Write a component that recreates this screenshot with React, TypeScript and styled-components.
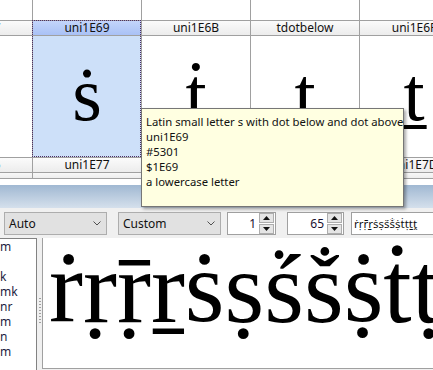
import React from 'react';
import styled, { createGlobalStyle, css } from 'styled-components';

const UI_FONT = `"Noto Sans", "Open Sans", sans-serif`;
const GLYPH_FONT = `"Liberation Serif", "DejaVu Serif", serif`;

const GlobalStyle = createGlobalStyle`
  html, body { margin: 0; padding: 0; }
  body {
    width: 433px;
    height: 370px;
    overflow: hidden;
    background: #f0f0f0;
    font-family: ${UI_FONT};
  }
`;

const Root = styled.div`
  position: relative;
  width: 433px;
  height: 370px;
  overflow: hidden;
  display: flex;
  flex-direction: column;
  background: #f0f0f0;
  font-family: ${UI_FONT};
  font-size: 12px;
  color: #000;
`;

/* ---------- glyph grid ---------- */

const GridPane = styled.div`
  flex: none;
  height: 185px;
  background: #fff;
  overflow: hidden;
  display: flex;
  flex-direction: column;
`;

const GridRow = styled.div<{ $h: number }>`
  flex: none;
  display: flex;
  height: ${(p) => p.$h}px;
  margin-left: -76px;
`;

type CellKind = 'blank' | 'caption' | 'glyph' | 'strip';

const Cell = styled.div<{ $kind: CellKind; $selected?: boolean }>`
  position: relative;
  flex: none;
  box-sizing: border-box;
  width: 109px;
  height: 100%;
  border-right: 1px solid #a0a0a0;
  border-bottom: 1px solid #a0a0a0;
  background: #fff;
  overflow: visible;

  ${(p) =>
    p.$kind === 'caption' &&
    css`
      background: linear-gradient(#fbfbfb, #ececec);
      text-align: center;
      font-size: 12px;
      line-height: 14px;
      white-space: nowrap;
      color: #111;
    `}

  ${(p) =>
    p.$kind === 'strip' &&
    css`
      background: linear-gradient(#f7f7f7, #ededed);
    `}

  ${(p) =>
    p.$kind === 'glyph' &&
    css`
      font-family: ${GLYPH_FONT};
      font-size: 76px;
      line-height: 76px;
      padding-top: 20px;
      text-align: center;
      white-space: nowrap;
      color: #000;
    `}

  ${(p) =>
    p.$selected &&
    p.$kind === 'caption' &&
    css`
      background: linear-gradient(#c3d5fb, #a9c1f5);
      &::after {
        content: '';
        position: absolute;
        top: -1px;
        left: -1px;
        right: 0;
        bottom: 0;
        border: 1px dotted #4c2f63;
        border-bottom: none;
      }
    `}

  ${(p) =>
    p.$selected &&
    p.$kind === 'glyph' &&
    css`
      background: #cde0f9;
      &::after {
        content: '';
        position: absolute;
        top: 0;
        left: -1px;
        right: 0;
        bottom: 0;
        border: 1px dotted #4c2f63;
        border-top: none;
      }
    `}
`;

const Band = styled.div`
  flex: none;
  height: 23px;
  background: linear-gradient(#a0b8d2, #d5e0ec);
`;

/* ---------- toolbar ---------- */

const Toolbar = styled.div`
  flex: none;
  height: 30px;
  box-sizing: border-box;
  padding: 4px 0 0 4px;
  display: flex;
  align-items: flex-start;
  overflow: hidden;
`;

const Combo = styled.div<{ $w: number; $ml?: number }>`
  flex: none;
  box-sizing: border-box;
  width: ${(p) => p.$w}px;
  height: 23px;
  margin-left: ${(p) => p.$ml ?? 0}px;
  border: 1px solid #adadad;
  background: #e1e1e1;
  display: flex;
  align-items: center;
  justify-content: space-between;
  padding: 0 5px 0 4px;
  font-size: 12px;
  color: #111;
`;

const Chevron = () => (
  <svg width="8" height="5" viewBox="0 0 8 5">
    <polyline points="0.5,0.5 4,4 7.5,0.5" fill="none" stroke="#505050" strokeWidth="1" />
  </svg>
);

const SpinBox = styled.div<{ $w: number; $ml?: number }>`
  flex: none;
  box-sizing: border-box;
  width: ${(p) => p.$w}px;
  height: 23px;
  margin-left: ${(p) => p.$ml ?? 0}px;
  border: 1px solid #a0a0a0;
  background: #fff;
  display: flex;
  align-items: stretch;
  padding: 0 1px 0 0;
`;

const SpinValue = styled.div`
  flex: 1;
  text-align: right;
  padding-right: 3px;
  line-height: 21px;
  font-size: 12px;
  color: #1a1030;
`;

const SpinButtons = styled.div`
  flex: none;
  width: 15px;
  display: flex;
  flex-direction: column;
  gap: 1px;
`;

const SpinButton = styled.div`
  flex: 1;
  box-sizing: border-box;
  border: 1px solid #adadad;
  background: #e5e5e5;
  display: flex;
  align-items: center;
  justify-content: center;
`;

const Arrow = ({ up }: { up?: boolean }) => (
  <svg width="7" height="4" viewBox="0 0 7 4">
    <polygon points={up ? '0,4 3.5,0 7,4' : '0,0 3.5,4 7,0'} fill="#111" />
  </svg>
);

const TextField = styled.div<{ $ml?: number }>`
  flex: 1;
  box-sizing: border-box;
  height: 23px;
  margin-left: ${(p) => p.$ml ?? 0}px;
  margin-right: -10px;
  border: 1px solid #a0a0a0;
  background: #fff;
  padding-left: 2px;
  line-height: 21px;
  font-size: 11.5px;
  white-space: nowrap;
  overflow: hidden;
  color: #111;
`;

/* ---------- bottom ---------- */

const Bottom = styled.div`
  flex: 1;
  display: flex;
  min-height: 0;
`;

const List = styled.div`
  flex: none;
  box-sizing: border-box;
  width: 37px;
  border-top: 1px solid #828282;
  border-right: 1px solid #828282;
  background: #fff;
  overflow: hidden;
`;

const ListItem = styled.div`
  height: 15px;
  line-height: 15px;
  font-size: 12px;
  white-space: nowrap;
  color: #1c1c40;
`;

const Splitter = styled.div`
  flex: none;
  width: 5px;
  display: flex;
  justify-content: center;
`;

const Grip = styled.div`
  width: 2px;
  height: 27px;
  margin-top: 60px;
  background: repeating-linear-gradient(#a0a0a0 0 1px, transparent 1px 3px);
`;

const Preview = styled.div`
  flex: 1;
  box-sizing: border-box;
  margin-bottom: 1px;
  border-left: 1px solid #a0a0a0;
  border-bottom: 1px solid #a0a0a0;
  background: #fff;
  overflow: hidden;
  white-space: nowrap;
  font-family: ${GLYPH_FONT};
  font-size: 102px;
  line-height: 99px;
  padding-left: 6px;
  color: #000;
`;

/* ---------- tooltip ---------- */

const Tooltip = styled.div`
  position: absolute;
  left: 141px;
  top: 108px;
  width: 263px;
  height: 99px;
  box-sizing: border-box;
  border: 1px solid #767676;
  background: #ffffe1;
  box-shadow: 2px 2px 3px rgba(0, 0, 0, 0.35);
  padding: 5px 0 0 4px;
  font-size: 11.3px;
  line-height: 15px;
  color: #111;
  white-space: nowrap;
`;

const TipLine = styled.div``;

/* ---------- data ---------- */

const topCaptions = ['uni1E67', 'uni1E69', 'uni1E6B', 'tdotbelow', 'uni1E6F'];
const glyphs = ['\u1E67', '\u1E61', '\u1E6B', '\u1E6D', '\u1E6F'];
const bottomCaptions = ['uni1E75', 'uni1E77', 'uni1E79', 'uni1E7B', 'uni1E7D'];
const listItems = ['m', '', 'k', 'mk', 'nr', 'm', 'n', 'm'];
const sample = '\u1E59\u1E5B\u1E5D\u1E5F\u1E61\u1E63\u1E65\u1E67\u1E69\u1E6B\u1E6D\u1E6F\u1E71';
const tipLines = [
  'Latin small letter s with dot below and dot above',
  'uni1E69',
  '#5301',
  '$1E69',
  'a lowercase letter',
];

export default function App() {
  const cols = [0, 1, 2, 3, 4];
  return (
    <>
      <GlobalStyle />
      <Root>
        <GridPane>
          <GridRow $h={21}>
            {cols.map((i) => (
              <Cell key={i} $kind="blank" />
            ))}
          </GridRow>
          <GridRow $h={15}>
            {cols.map((i) => (
              <Cell key={i} $kind="caption" $selected={i === 1}>
                {topCaptions[i]}
              </Cell>
            ))}
          </GridRow>
          <GridRow $h={122}>
            {cols.map((i) => (
              <Cell key={i} $kind="glyph" $selected={i === 1}>
                {glyphs[i]}
              </Cell>
            ))}
          </GridRow>
          <GridRow $h={15}>
            {cols.map((i) => (
              <Cell key={i} $kind="caption">
                {bottomCaptions[i]}
              </Cell>
            ))}
          </GridRow>
          <GridRow $h={6}>
            {cols.map((i) => (
              <Cell key={i} $kind="strip" />
            ))}
          </GridRow>
        </GridPane>
        <Band />
        <Toolbar>
          <Combo $w={103}>
            Auto
            <Chevron />
          </Combo>
          <Combo $w={103} $ml={11}>
            Custom
            <Chevron />
          </Combo>
          <SpinBox $w={49} $ml={6}>
            <SpinValue>1</SpinValue>
            <SpinButtons>
              <SpinButton>
                <Arrow up />
              </SpinButton>
              <SpinButton>
                <Arrow />
              </SpinButton>
            </SpinButtons>
          </SpinBox>
          <SpinBox $w={57} $ml={11}>
            <SpinValue>65</SpinValue>
            <SpinButtons>
              <SpinButton>
                <Arrow up />
              </SpinButton>
              <SpinButton>
                <Arrow />
              </SpinButton>
            </SpinButtons>
          </SpinBox>
          <TextField $ml={7}>{sample}</TextField>
        </Toolbar>
        <Bottom>
          <List>
            {listItems.map((t, i) => (
              <ListItem key={i}>{t || '\u00a0'}</ListItem>
            ))}
          </List>
          <Splitter>
            <Grip />
          </Splitter>
          <Preview>{sample}</Preview>
        </Bottom>
        <Tooltip>
          {tipLines.map((l, i) => (
            <TipLine key={i}>{l}</TipLine>
          ))}
        </Tooltip>
      </Root>
    </>
  );
}
